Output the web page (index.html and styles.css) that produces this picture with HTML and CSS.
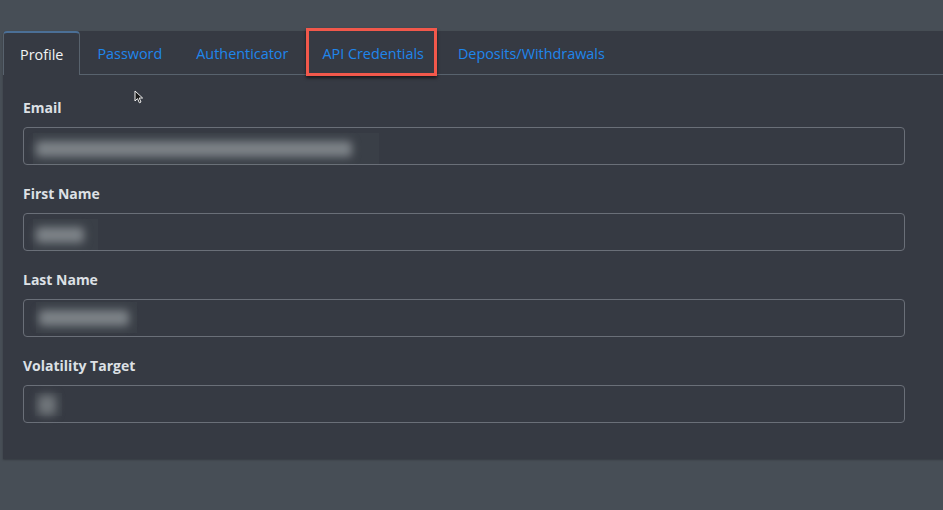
FILE: index.html
```html
<!DOCTYPE html>
<html>
<head>
	<meta charset="utf-8">
	<title>Account Settings</title>
	<link rel="stylesheet" href="styles.css">
</head>
<body class="body">

	<div class="card">
		<div class="tabBar">
			<div class="tab tabActive">Profile</div>
			<div class="tab">Password</div>
			<div class="tab">Authenticator</div>
			<div class="tab tabMarked">API Credentials</div>
			<div class="tab">Deposits/Withdrawals</div>
		</div>

		<div class="form">
			<div class="field">
				<label class="fieldLabel">Email</label>
				<div class="fieldInput">
					<div class="blurBox" style="width:343px;"><div class="blurText" style="width:316px;"></div></div>
				</div>
			</div>
			<div class="field">
				<label class="fieldLabel">First Name</label>
				<div class="fieldInput">
					<div class="blurBox" style="width:62px;"><div class="blurText" style="width:48px;"></div></div>
				</div>
			</div>
			<div class="field">
				<label class="fieldLabel">Last Name</label>
				<div class="fieldInput">
					<div class="blurBox blurBoxWide" style="width:98px;"><div class="blurText" style="width:90px;"></div></div>
				</div>
			</div>
			<div class="field">
				<label class="fieldLabel">Volatility Target</label>
				<div class="fieldInput">
					<div class="blurBox blurBoxSmall" style="width:24px;"><div class="blurText blurDot" style="width:18px;"></div></div>
				</div>
			</div>
		</div>
	</div>

	<svg class="cursor" width="10" height="14" viewBox="0 0 10 14">
		<path d="M1 1 L1 11 L3.5 8.6 L5.4 12.8 L7 12 L5.2 8 L8.6 8 Z" fill="#1a1a1a" stroke="#f0f0f0" stroke-width="1"/>
	</svg>

</body>
</html>
```

FILE: styles.css
```css
.body {
	margin: 0;
	width: 943px;
	height: 510px;
	background-color: #474e56;
	font-family: "Open Sans", "Noto Sans", sans-serif;
	overflow: hidden;
	position: relative;
}

.card {
	margin-top: 31px;
	margin-left: 3px;
	width: 960px;
	height: 428px;
	background-color: #363a43;
	border-top-left-radius: 4px;
	box-shadow: 0 1px 2px rgba(0, 0, 0, 0.25);
}

.tabBar {
	display: flex;
	height: 43px;
	border-bottom: 1px solid #58626d;
}

.tab {
	display: flex;
	align-items: center;
	padding: 1px 16px 0 16px;
	border: 1px solid transparent;
	border-bottom: none;
	font-size: 14.4px;
	color: #1f86ec;
	white-space: nowrap;
	position: relative;
}

.tabActive {
	color: #f2f4f6;
	border-color: #58626d;
	border-top: 2px solid #4b6f96;
	border-top-left-radius: 4px;
	border-top-right-radius: 4px;
	margin-bottom: -1px;
	background-color: #363a43;
}

.tabMarked::after {
	content: "";
	position: absolute;
	left: 0;
	right: 3px;
	top: -4px;
	bottom: -2px;
	border: 3px solid #f2584b;
	box-shadow: 0 2px 3px rgba(0, 0, 0, 0.6);
}

.form {
	padding: 23px 58px 0 20px;
}

.field {
	margin-bottom: 19px;
}

.fieldLabel {
	display: block;
	font-size: 14px;
	font-weight: bold;
	color: #dde0e5;
	height: 20px;
	line-height: 20px;
	margin-bottom: 9px;
}

.fieldInput {
	height: 36px;
	border: 1px solid #6a6f78;
	border-radius: 4px;
	display: flex;
	align-items: flex-end;
	padding-left: 9px;
}

.blurBox {
	height: 31px;
	background-color: #3a3f47;
	display: flex;
	align-items: center;
	padding-left: 3px;
}

.blurBoxWide {
	height: 31px;
	margin-bottom: 3px;
	margin-left: 3px;
}

.blurBoxSmall {
	height: 23px;
	margin-bottom: 6px;
	margin-left: 2px;
}

.blurText {
	height: 16px;
	background-color: #7c8287;
	filter: blur(4px);
	border-radius: 4px;
}

.blurDot {
	height: 20px;
	background-color: #6f7479;
}

.cursor {
	position: absolute;
	left: 134px;
	top: 90px;
}
```
